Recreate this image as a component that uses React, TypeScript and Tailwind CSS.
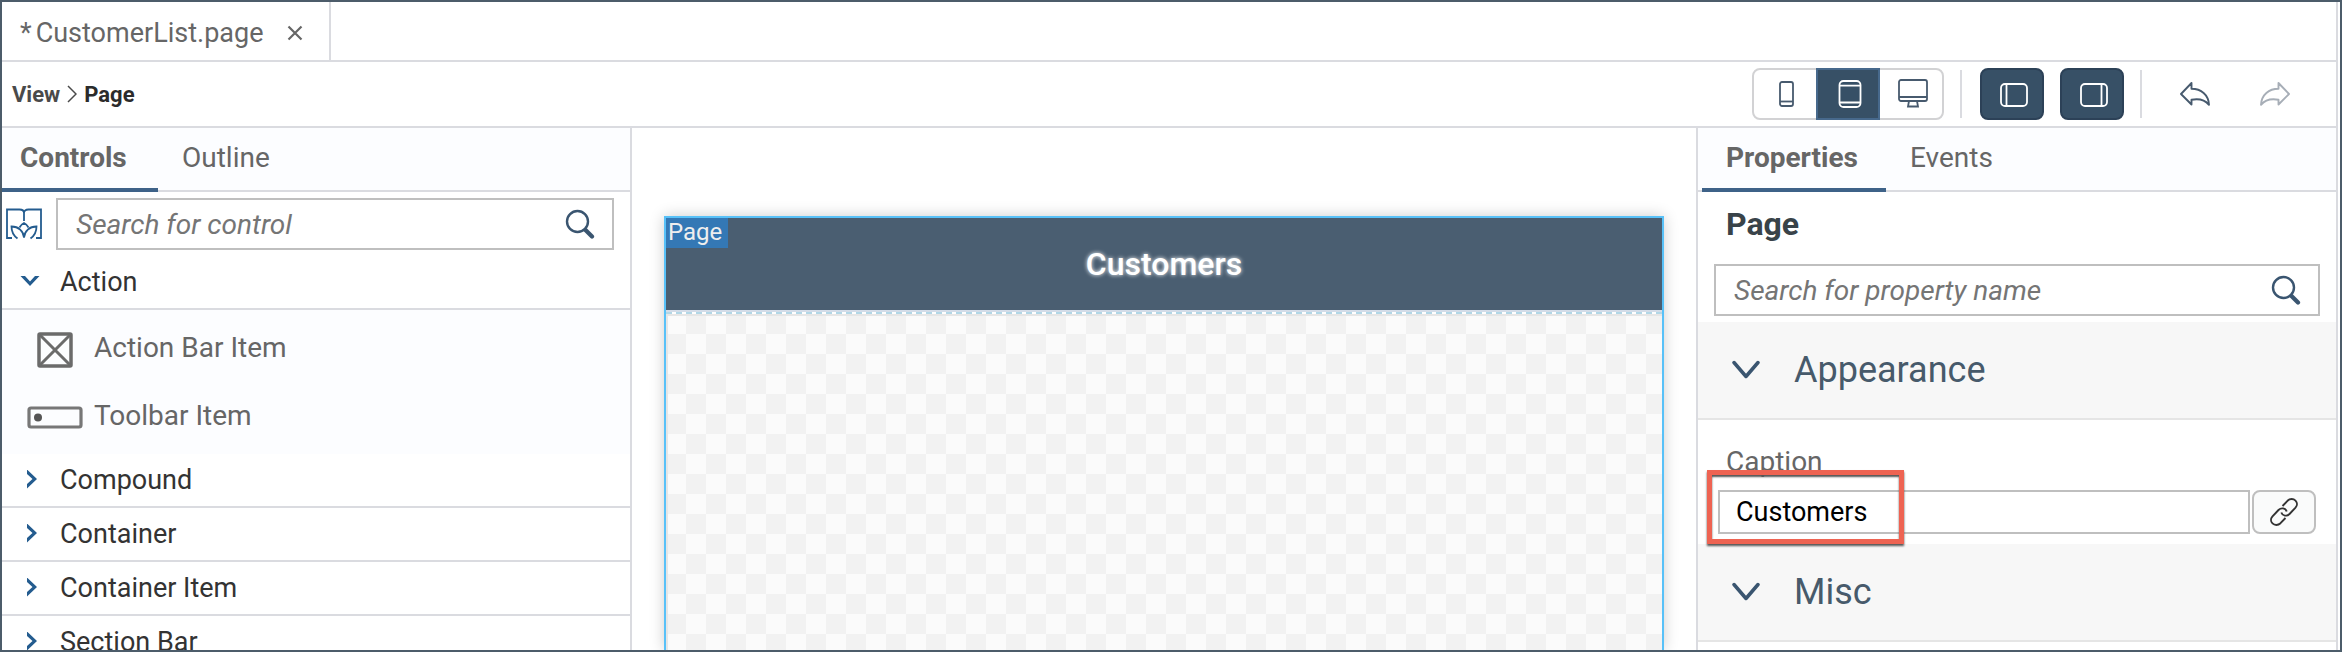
import { ReactNode, useState } from "react";

const CHECKER =
  "bg-[#fbfbfb] bg-[conic-gradient(#fbfbfb_25%,#f2f2f2_0_50%,#fbfbfb_0_75%,#f2f2f2_0)] bg-[length:40px_40px]";

function SearchIcon() {
  return (
    <svg viewBox="0 0 30 30" className="size-[30px]" fill="none" stroke="#3a5570" strokeLinecap="round">
      <circle cx="12.500" cy="12.500" r="10.500" strokeWidth="2.400" />
      <path d="M20.500 21 L27 27.500" strokeWidth="4.200" />
    </svg>
  );
}

function LibraryIcon() {
  return (
    <svg viewBox="0 0 36 32" className="h-8 w-9" fill="none" stroke="#245c8f" strokeWidth="1.8">
      <path d="M6 30 H1 V1.5 H13.5 C16.5 1.5 18 3 18 5 C18 3 19.5 1.5 22.5 1.5 H35 V30 H30" />
      <path d="M18 5 V13" />
      <path d="M13.500 19.500 C14.500 17.500 16 16 18 15 C20 16 21.500 17.500 22.500 19.500" />
      <path d="M18 29.500 C17.500 23 12.500 18.500 5.500 18.500 C5.500 24 8 28 11.500 30.500" />
      <path d="M18 29.500 C18.500 23 23.500 18.500 30.500 18.500 C30.500 24 28 28 24.500 30.500" />
    </svg>
  );
}

function SmallChevron({ open }: { open: boolean }) {
  return open ? (
    <svg viewBox="0 0 20 20" className="size-5" fill="#245c8f">
      <path d="M0.500 4 H5 L10 9.500 L15 4 H19.500 L10 14 Z" />
    </svg>
  ) : (
    <svg viewBox="0 0 20 20" className="size-5" fill="#245c8f">
      <path d="M7 -0.500 V4 L12.500 9 L7 14 V18.500 L17 9 Z" />
    </svg>
  );
}

function SectionChevron() {
  return (
    <svg viewBox="0 0 28 20" className="h-5 w-7" fill="none" stroke="#3a5570" strokeWidth="3.500" strokeLinecap="round" strokeLinejoin="round">
      <path d="M2 2.500 L14 16.500 L26 2.500" />
    </svg>
  );
}

function PhoneIcon() {
  return (
    <svg viewBox="0 0 30 30" className="size-[30px]" fill="none" stroke="#475a6e" strokeWidth="1.800">
      <rect x="8" y="3" width="13" height="24" rx="2" />
      <path d="M8 22.500 H21" />
    </svg>
  );
}

function TabletIcon() {
  return (
    <svg viewBox="0 0 30 30" className="size-[30px]" fill="none" stroke="#fff" strokeWidth="1.800">
      <rect x="4.500" y="2" width="21" height="26" rx="4" />
      <path d="M5 6.700 H25 M5 23.500 H25" />
    </svg>
  );
}

function DesktopIcon() {
  return (
    <svg viewBox="0 0 30 30" className="size-[30px]" fill="none" stroke="#475a6e" strokeWidth="1.800">
      <rect x="1" y="1" width="28" height="21" rx="2" />
      <path d="M1 18 H29 M11 22 L10 27.500 H20 L19 22" />
    </svg>
  );
}

function PanelIcon({ side }: { side: "left" | "right" }) {
  return (
    <svg viewBox="0 0 28 24" className="h-6 w-7" fill="none" stroke="#fff" strokeWidth="1.800">
      <rect x="1" y="1" width="26" height="22" rx="4" />
      <path d={side === "left" ? "M6.500 1.500 V22.500" : "M21.500 1.500 V22.500"} />
    </svg>
  );
}

function UndoIcon() {
  return (
    <svg viewBox="0 0 30 24" className="h-6 w-[30px]" fill="none" stroke="#475a6e" strokeWidth="1.900" strokeLinejoin="round">
      <path d="M1 12 L11.500 1 V6.800 C21 6.800 28.500 12.500 29 22.800 C25 18 18.500 16.500 11.500 17.800 V22.500 Z" />
    </svg>
  );
}

function RedoIcon() {
  return (
    <svg viewBox="0 0 30 24" className="h-6 w-[30px]" fill="none" stroke="#a7aeb7" strokeWidth="1.900" strokeLinejoin="round">
      <path d="M29 12 L18.500 1 V6.800 C9 6.800 1.500 12.500 1 22.800 C5 18 11.500 16.500 18.500 17.800 V22.500 Z" />
    </svg>
  );
}

function LinkIcon() {
  return (
    <svg viewBox="0 0 28 28" className="size-7" fill="none" stroke="#333" strokeWidth="1.900">
      <path d="M12.500 8 L17.500 2.800 C20 0.400 23.500 0.600 25.500 2.600 C27.400 4.500 27.500 7.500 25.500 9.700 L19.500 16 C16.800 18.700 12.500 18 11.300 14.500" />
      <path d="M15.500 20 L10.500 25.200 C8 27.600 4.500 27.400 2.500 25.400 C0.600 23.500 0.500 20.500 2.500 18.300 L8.500 12 C11.200 9.300 15.500 10 16.700 13.500" />
    </svg>
  );
}

function ActionBarItemIcon() {
  return (
    <svg viewBox="0 0 36 36" className="size-9" fill="none" stroke="#6b6b6b" strokeWidth="3.500">
      <rect x="2" y="2" width="32" height="32" rx="1" />
      <path d="M3 3 L33 33 M33 3 L3 33" strokeWidth="3" />
    </svg>
  );
}

function ToolbarItemIcon() {
  return (
    <svg viewBox="0 0 56 24" className="h-6 w-14" fill="none" stroke="#777" strokeWidth="3.200">
      <rect x="2" y="2" width="52" height="19" rx="2" />
      <circle cx="11" cy="11.500" r="4" fill="#555" stroke="none" />
    </svg>
  );
}

function Tab({ label, active, className }: { label: string; active?: boolean; className: string }) {
  return (
    <button
      role="tab"
      aria-selected={!!active}
      className={`h-full border-b-4 text-left text-[28px] text-[#666] ${active ? "border-[#3e6288] font-bold" : "border-transparent"} ${className}`}
    >
      {label}
    </button>
  );
}

function SearchBox({ id, label }: { id: string; label: string }) {
  return (
    <div className="flex h-[52px] min-w-0 flex-1 items-center border-2 border-[#bfbfbf] bg-white pr-[17px] pl-[18px]">
      <label htmlFor={id} className="sr-only">
        {label}
      </label>
      <input
        id={id}
        type="text"
        placeholder={label}
        className="h-full min-w-0 flex-1 bg-transparent text-[28px] outline-none placeholder:text-[#757575] placeholder:italic"
      />
      <button aria-label={label}>
        <SearchIcon />
      </button>
    </div>
  );
}

function Group({ label, open }: { label: string; open?: boolean }) {
  return (
    <button
      aria-expanded={!!open}
      className="flex h-[54px] w-full shrink-0 items-center gap-5 border-b-2 border-[#dadbe0] bg-white pl-[18px] text-left text-[27px] text-[#333]"
    >
      <SmallChevron open={!!open} />
      {label}
    </button>
  );
}

function PaletteItem({ icon, label }: { icon: ReactNode; label: string }) {
  return (
    <li className="flex h-[68px] items-center text-[28px] text-[#666]">
      <span className="flex w-[92px] justify-center pt-1 pl-[14px]">{icon}</span>
      {label}
    </li>
  );
}

function Section({ label }: { label: string }) {
  return (
    <button
      aria-expanded="true"
      className="flex h-[98px] w-full shrink-0 items-center gap-[34px] border-b-2 border-[#e5e5e5] bg-[#f7f7f7] pl-[34px] text-left text-[36px] text-[#475a6b]"
    >
      <SectionChevron />
      {label}
    </button>
  );
}

export default function App() {
  const [caption, setCaption] = useState("Customers");

  return (
    <div className="h-screen overflow-hidden border-2 border-[#4c5c6a] bg-white pr-0.5 font-['Roboto',sans-serif]">
      <div className="flex h-full flex-col border-r-2 border-[#dadbe0]">
        <div className="flex h-[60px] shrink-0 border-b-2 border-[#dadbe0]">
          <div className="flex items-center border-r-2 border-[#dadbe0] pt-1 pr-[26px] pl-[18px] text-[27px] text-[#666]">
            <span className="pr-1">*</span>
            <span>CustomerList.page</span>
            <button aria-label="Close CustomerList.page" className="pl-6">
              <svg viewBox="0 0 16 16" className="size-4" stroke="#666" strokeWidth="2.200">
                <path d="M1.500 1.500 L14.500 14.500 M14.500 1.500 L1.500 14.500" />
              </svg>
            </button>
          </div>
        </div>

        <header className="flex h-[66px] shrink-0 items-center border-b-2 border-[#dadbe0] pr-[34px] pl-[10px]">
          <nav aria-label="Breadcrumb" className="flex flex-1 items-center gap-[7px] text-[22px] font-bold">
            <a href="#view" className="text-[#4a4a4a]">
              View
            </a>
            <svg viewBox="0 0 10 18" className="h-[18px] w-[10px]" fill="none" stroke="#4a4a4a" strokeWidth="1.500">
              <path d="M1 1 L9 9 L1 17" />
            </svg>
            <a href="#page" className="text-[#2b2b2b]">
              Page
            </a>
          </nav>

          <div className="flex h-[52px] w-48 rounded-lg border-2 border-[#d2d2d4]">
            <button aria-label="Phone" className="flex w-[62px] items-center justify-center pl-1">
              <PhoneIcon />
            </button>
            <button
              aria-label="Tablet"
              className="-my-0.5 flex w-16 items-center justify-center border-2 border-[#47698c] bg-[#375066] pl-1"
            >
              <TabletIcon />
            </button>
            <button aria-label="Desktop" className="flex flex-1 items-center justify-center pl-1">
              <DesktopIcon />
            </button>
          </div>
          <div className="ml-4 h-12 w-0.5 bg-[#dadbe0]" />
          <button
            aria-label="Toggle left panel"
            className="ml-[18px] flex h-[52px] w-16 items-center justify-center rounded-lg border-2 border-[#2c4157] bg-[#375066] pt-0.5 pl-1"
          >
            <PanelIcon side="left" />
          </button>
          <button
            aria-label="Toggle right panel"
            className="ml-4 flex h-[52px] w-16 items-center justify-center rounded-lg border-2 border-[#2c4157] bg-[#375066] pt-0.5 pl-1"
          >
            <PanelIcon side="right" />
          </button>
          <div className="ml-4 h-12 w-0.5 bg-[#dadbe0]" />
          <button aria-label="Undo" className="flex h-[52px] w-20 items-center justify-end pr-3">
            <UndoIcon />
          </button>
          <button aria-label="Redo" className="flex h-[52px] w-20 items-center justify-end pr-3">
            <RedoIcon />
          </button>
        </header>

        <div className="flex min-h-0 flex-1">
          <aside className="flex w-[630px] shrink-0 flex-col overflow-hidden border-r-2 border-[#dadbe0]">
            <div role="tablist" className="flex h-16 shrink-0 bg-[#fcfdff] shadow-[inset_0_-2px_#dadbe0]">
              <Tab label="Controls" active className="w-[156px] pl-[18px]" />
              <Tab label="Outline" className="px-6" />
            </div>
            <div className="flex shrink-0 items-center gap-[14px] pt-1.5 pr-4 pb-1.5 pl-1">
              <button aria-label="Control library">
                <LibraryIcon />
              </button>
              <SearchBox id="control-search" label="Search for control" />
            </div>
            <Group label="Action" open />
            <ul className="h-36 shrink-0 bg-[#fcfdff] pt-1">
              <PaletteItem icon={<ActionBarItemIcon />} label="Action Bar Item" />
              <PaletteItem icon={<ToolbarItemIcon />} label="Toolbar Item" />
            </ul>
            <Group label="Compound" />
            <Group label="Container" />
            <Group label="Container Item" />
            <Group label="Section Bar" />
          </aside>

          <main className="flex min-w-0 flex-1 flex-col px-8 pt-[88px]">
            <div className="flex flex-1 flex-col border-2 border-b-0 border-[#58c1f8] shadow-[0_0_14px_rgba(0,0,0,0.2)]">
              <div className="relative flex h-[92px] shrink-0 items-center justify-center bg-[#4a5e71]">
                <span className="absolute top-0 left-0 h-[30px] w-[62px] bg-[#3478b5] pl-0.5 text-[24px] leading-7 text-[#eee]">
                  Page
                </span>
                <h1 className="text-[32px] font-medium text-white [text-shadow:0_0_4px_#fff]">Customers</h1>
              </div>
              <div className="h-0.5 shrink-0 bg-[#d3dce8]" />
              <div className="h-0.5 shrink-0 border-t-2 border-dashed border-[#b3d7e6]" />
              <div className={`flex-1 border-t-2 border-l-2 border-[#e6e6e6] bg-origin-border bg-position-[20px_0] ${CHECKER}`} />
            </div>
          </main>

          <aside className="flex w-[640px] shrink-0 flex-col overflow-hidden border-l-2 border-[#dadbe0]">
            <div role="tablist" className="flex h-16 shrink-0 bg-[#fcfdff] pl-1 shadow-[inset_0_-2px_#dadbe0]">
              <Tab label="Properties" active className="w-[184px] pl-6" />
              <Tab label="Events" className="px-6" />
            </div>
            <h2 className="flex h-[72px] shrink-0 items-center pb-2 pl-[28px] text-[32px] font-bold text-[#394349]">Page</h2>
            <div className="flex shrink-0 pr-4 pb-1.5 pl-4">
              <SearchBox id="property-search" label="Search for property name" />
            </div>
            <Section label="Appearance" />
            <div className="flex shrink-0 flex-col pt-6 pr-5 pb-[10px] pl-5">
              <label htmlFor="caption" className="h-[46px] pl-2 text-[28px] leading-9 text-[#666]">
                Caption
              </label>
              <div className="relative flex gap-0.5">
                <input
                  id="caption"
                  type="text"
                  value={caption}
                  onChange={(e) => setCaption(e.target.value)}
                  className="h-11 min-w-0 flex-1 border-2 border-[#bfbfbf] bg-white px-4 text-[27px] text-black outline-none"
                />
                <button
                  aria-label="Bind caption"
                  className="flex h-11 w-16 items-center justify-center rounded-lg border-2 border-[#bfbfbf] bg-[#fafbfb]"
                >
                  <LinkIcon />
                </button>
                <div className="pointer-events-none absolute -top-5 -left-[11px] h-[74px] w-[197px] border-[5px] border-[#ee6352] shadow-[0_2px_2px_#555,inset_0_2px_2px_#555]" />
              </div>
            </div>
            <Section label="Misc" />
          </aside>
        </div>
      </div>
    </div>
  );
}
